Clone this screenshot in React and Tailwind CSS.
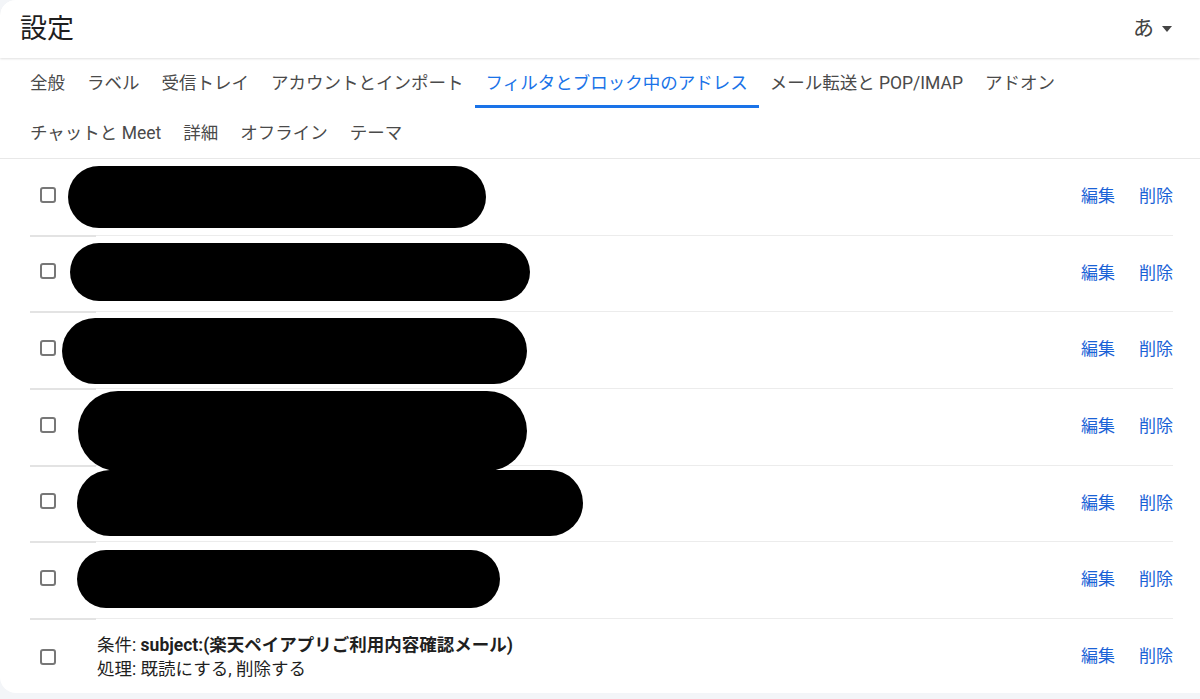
import React from 'react';

const tabsTop = [
  '全般',
  'ラベル',
  '受信トレイ',
  'アカウントとインポート',
  'フィルタとブロック中のアドレス',
  'メール転送と POP/IMAP',
  'アドオン',
];
const tabsBottom = ['チャットと Meet', '詳細', 'オフライン', 'テーマ'];

// redaction blobs: left, width, top offset, height, row height
const blobs = [
  { left: 68, width: 418, top: 7, height: 62, h: 76 },
  { left: 70, width: 460, top: 7, height: 58, h: 75 },
  { left: 62, width: 465, top: 6, height: 66, h: 76 },
  { left: 78, width: 449, top: 2, height: 80, h: 76 },
  { left: 77, width: 506, top: 4, height: 66, h: 75 },
  { left: 77, width: 423, top: 8, height: 58, h: 76 },
];

function Checkbox() {
  return <div className="w-[16px] h-[16px] border-2 border-[#777] rounded-[3px] shrink-0" />;
}

function Divider() {
  return (
    <div className="flex ml-[30px] w-[1143px] h-px">
      <div className="w-[66px] h-[2px] bg-[#e3e3e3]" />
      <div className="flex-1 h-px bg-[#ececec]" />
    </div>
  );
}

function Tab({ label, active }) {
  return (
    <div className="relative px-[11px] h-[50px] flex items-center">
      <span className={active ? 'text-[#1a73e8]' : 'text-[#4a4a4a]'}>{label}</span>
      {active && <div className="absolute left-0 right-0 bottom-0 h-[3px] bg-[#1a73e8]" />}
    </div>
  );
}

function Actions() {
  return (
    <div className="flex items-center gap-[24px] text-[#1a62d6] text-[17px] pr-[27px]">
      <span>編集</span>
      <span>削除</span>
    </div>
  );
}

function FilterRow({ blob }) {
  return (
    <div>
      <div className="relative flex items-center pl-[40px]" style={{ height: blob.h }}>
        <div className="-mt-[5px]">
          <Checkbox />
        </div>
        <div
          className="absolute z-10 bg-black rounded-full"
          style={{ left: blob.left, width: blob.width, top: blob.top, height: blob.height }}
        />
        <div className="flex-1" />
        <Actions />
      </div>
      <Divider />
    </div>
  );
}

export default function App() {
  return (
    <div
      className="w-[1200px] h-[699px] bg-[#f3f5f8] overflow-hidden"
      style={{ fontFamily: 'Roboto, "Noto Sans CJK JP", sans-serif' }}
    >
      <div className="h-[693px] bg-white rounded-l-[16px] overflow-hidden">
        <div className="h-[58px] flex items-center justify-between pl-[20px] pr-[28px] shadow-[0_1px_2px_rgba(0,0,0,0.12)] relative z-20 bg-white">
          <h1 className="text-[27px] text-[#1f1f1f] leading-none">設定</h1>
          <div className="flex items-center gap-[8px] text-[#444]">
            <span className="text-[21px]">あ</span>
            <svg width="10" height="6" viewBox="0 0 10 6">
              <path d="M0 0 L10 0 L5 6 Z" fill="#444" />
            </svg>
          </div>
        </div>
        <div className="pl-[19px] border-b border-[#e8e8e8] text-[17.5px]">
          <div className="flex">
            {tabsTop.map((t, i) => (
              <Tab key={t} label={t} active={i === 4} />
            ))}
          </div>
          <div className="flex">
            {tabsBottom.map((t) => (
              <Tab key={t} label={t} />
            ))}
          </div>
        </div>
        {blobs.map((b, i) => (
          <FilterRow key={i} blob={b} />
        ))}
        <div className="h-[76px] flex items-center pl-[40px]">
          <Checkbox />
          <div className="ml-[41px] text-[17.5px] leading-[24px] text-[#1f1f1f] -mt-[1px]">
            <div>
              条件: <span className="font-bold">subject:(楽天ペイアプリご利用内容確認メール)</span>
            </div>
            <div>処理: 既読にする, 削除する</div>
          </div>
          <div className="flex-1" />
          <Actions />
        </div>
      </div>
    </div>
  );
}
